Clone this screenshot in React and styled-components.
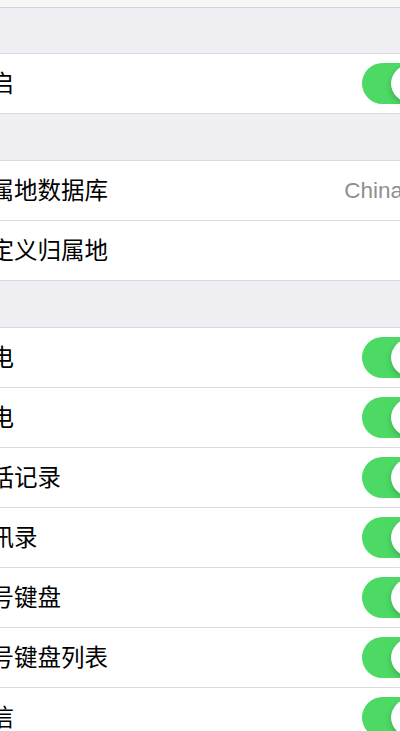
import styled, { createGlobalStyle } from 'styled-components';

const GlobalStyle = createGlobalStyle`
  html, body {
    margin: 0;
    padding: 0;
    overflow: hidden;
    background: #efeff4;
  }
`

const Page = styled.div`
  width: 500px;
  margin-left: -53px;
  background: #efeff4;
  font-family: "Noto Sans CJK SC", "Noto Sans", sans-serif;
`

const NavEdge = styled.div`
  height: 7px;
  background: #f7f7f8;
  border-bottom: 1px solid #d3d3d8;
`

const Spacer = styled.div`
  height: ${({ $h }) => $h}px;
`

const Group = styled.div`
  background: #fff;
  border-top: 1px solid #d9d9de;
  border-bottom: 1px solid #d9d9de;
`

const Row = styled.div`
  height: 59px;
  display: flex;
  align-items: center;
  padding: 0 17px 0 20px;
  border-top: ${({ $first }) => ($first ? 'none' : '1px solid #dcdce0')};
`

const Label = styled.span`
  flex: 1;
  font-size: 23.5px;
  line-height: 1.2;
  color: #000;
  white-space: nowrap;
  margin-top: -2px;
`

const Value = styled.span`
  font-family: "Liberation Sans", Arial, sans-serif;
  font-size: 22.5px;
  color: #8e8e93;
  margin-right: 13px;
`

const Chevron = styled.svg`
  width: 11px;
  height: 18px;
  margin-right: 3px;
`

const Switch = styled.div`
  position: relative;
  width: 68px;
  height: 41px;
  border-radius: 21px;
  background: #4cd964;
  flex-shrink: 0;
`

const Knob = styled.div`
  position: absolute;
  top: 2px;
  right: 2px;
  width: 37px;
  height: 37px;
  border-radius: 50%;
  background: #fff;
  box-shadow: 0 3px 6px rgba(0, 0, 0, 0.2), 0 0 1px rgba(0, 0, 0, 0.15);
`

const Toggle = () => (
  <Switch>
    <Knob />
  </Switch>
)

const Arrow = () => (
  <Chevron viewBox="0 0 11 18">
    <path d="M2 2l7 7-7 7" fill="none" stroke="#c7c7cc" strokeWidth="2.4" />
  </Chevron>
)

const switches = ['来电', '去电', '通话记录', '通讯录', '拨号键盘', '拨号键盘列表', '短信']

const App = () => {
  return (
    <>
      <GlobalStyle />
      <Page>
        <NavEdge />
        <Spacer $h={45} />
        <Group>
          <Row $first>
            <Label>开启</Label>
            <Toggle />
          </Row>
        </Group>
        <Spacer $h={46} />
        <Group>
          <Row $first>
            <Label>归属地数据库</Label>
            <Value>China</Value>
            <Arrow />
          </Row>
          <Row>
            <Label>自定义归属地</Label>
            <Arrow />
          </Row>
        </Group>
        <Spacer $h={46} />
        <Group>
          {switches.map((s, i) => (
            <Row key={s} $first={i === 0}>
              <Label>{s}</Label>
              <Toggle />
            </Row>
          ))}
        </Group>
      </Page>
    </>
  )
}

export default App;
